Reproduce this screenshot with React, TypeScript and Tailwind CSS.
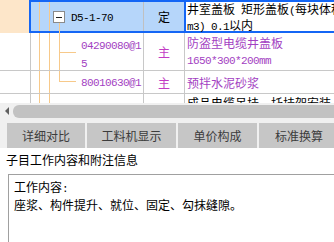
import type { ReactNode } from 'react'

// latin runs: narrow mono so that one char is about 6px, like the bitmap font
function L({ children }: { children: ReactNode }) {
  return <span className="font-['Liberation_Mono',monospace] text-[11px] tracking-[-0.6px]">{children}</span>
}

function VLine({ left, top = 0, h }: { left: number; top?: number; h?: number }) {
  return (
    <div
      className="absolute w-px bg-[#f7c98a]"
      style={{ left, top, height: h ?? '100%' }}
    />
  )
}

function HLine({ left, top, w }: { left: number; top: number; w: number }) {
  return <div className="absolute h-px bg-[#f7c98a]" style={{ left, top, width: w }} />
}

const TABS = [
  { label: '详细对比', w: 'w-[78px]' },
  { label: '工料机显示', w: 'w-[89px]' },
  { label: '单价构成', w: 'w-[79px]' },
  { label: '标准换算', w: 'w-[80px]' },
]

export default function App() {
  return (
    <div className="w-[334px] h-[242px] overflow-hidden bg-white font-['Noto_Sans_CJK_SC',sans-serif] text-[12px] leading-[15px] text-black">
      {/* grid */}
      <div className="h-[103px] overflow-hidden">
        {/* selected row */}
        <div className="flex h-[33px]">
          <div className="w-[29px] shrink-0 bg-[#fde6c9]" />
          <div className="flex w-[420px] shrink-0 border-2 border-[#1466f5] bg-[#b6d6fa]">
            <div className="relative w-[113px] shrink-0 border-r border-[#c0c0c0] flex items-center">
              <VLine left={8} />
              <VLine left={18} />
              <VLine left={28} top={21} />
              <div className="absolute left-[22px] top-[9px] w-[12px] h-[12px] border border-[#8a8a8a] bg-white flex items-center justify-center">
                <div className="w-[6px] h-px bg-[#222]" />
              </div>
              <div className="pl-[40px] leading-[14px]"><L>D5-1-70</L></div>
            </div>
            <div className="w-[40px] shrink-0 flex items-center justify-center">定</div>
            <div className="flex-1 bg-white border-l-2 border-[#1466f5] pl-[1px] whitespace-nowrap leading-[14px]">
              <div>井室盖板<L> </L>矩形盖板<L>(</L>每块体积</div>
              <div><L>m3) 0.1</L>以内</div>
            </div>
          </div>
        </div>

        {/* material 1 */}
        <div className="flex h-[38px] border-b border-[#c8c8c8]">
          <div className="w-[31px] shrink-0 border-r border-[#c8c8c8]" />
          <div className="relative w-[113px] shrink-0 border-r border-[#c8c8c8]">
            <VLine left={8} />
            <VLine left={18} />
            <VLine left={28} />
            <HLine left={28} top={19} w={17} />
            <div className="pl-[50px] pt-[3px] leading-[16px] text-[#a33fc2]">
              <div><L>04290080@1</L></div>
              <div><L>5</L></div>
            </div>
          </div>
          <div className="w-[41px] shrink-0 border-r border-[#c8c8c8] flex items-center justify-center text-[#c23bc4]">主</div>
          <div className="flex-1 pl-[2px] pt-[2px] whitespace-nowrap text-[#a33fc2] leading-[16px]">
            <div>防盗型电缆井盖板</div>
            <div><L>1650*300*200mm</L></div>
          </div>
        </div>

        {/* material 2 */}
        <div className="flex h-[23px] border-b border-[#c8c8c8]">
          <div className="w-[31px] shrink-0 border-r border-[#c8c8c8]" />
          <div className="relative w-[113px] shrink-0 border-r border-[#c8c8c8] flex items-center">
            <VLine left={8} />
            <VLine left={18} />
            <VLine left={28} h={10} />
            <HLine left={28} top={10} w={17} />
            <div className="pl-[50px] text-[#a33fc2]"><L>80010630@1</L></div>
          </div>
          <div className="w-[41px] shrink-0 border-r border-[#c8c8c8] flex items-center justify-center text-[#c23bc4]">主</div>
          <div className="flex-1 pl-[2px] flex items-center whitespace-nowrap text-[#a33fc2]">预拌水泥砂浆</div>
        </div>

        {/* next item, cut by the scrollbar */}
        <div className="flex h-[10px] overflow-hidden">
          <div className="w-[31px] shrink-0 border-r border-[#c8c8c8]" />
          <div className="relative w-[113px] shrink-0 border-r border-[#c8c8c8]">
            <VLine left={8} />
            <VLine left={18} />
          </div>
          <div className="w-[41px] shrink-0 border-r border-[#c8c8c8]" />
          <div className="flex-1 pl-[2px] pt-[1px] whitespace-nowrap">成品电缆吊挂、托挂架安装</div>
        </div>
      </div>

      {/* horizontal scrollbar */}
      <div className="flex h-[16px] items-center bg-[#f0f0f0]">
        <div className="w-[13px] shrink-0 flex items-center justify-center">
          <div className="w-0 h-0 border-y-[4px] border-y-transparent border-r-[4px] border-r-[#606060]" />
        </div>
        <div className="flex-1 h-[13px] rounded-l-[6px] bg-[#c2c2c2]" />
      </div>

      {/* tabs */}
      <div className="h-[4px] bg-[#f0f0f0]" />
      <div className="flex h-[25px] gap-[2px] pl-[7px] bg-[#f0f0f0] whitespace-nowrap">
        {TABS.map((t) => (
          <div key={t.label} className={`${t.w} shrink-0 bg-[#c6c6c6] flex items-center justify-center text-[#3c3c3c]`}>
            {t.label}
          </div>
        ))}
      </div>

      {/* notes panel */}
      <div className="pl-[6px] pt-[4px] leading-[16px]">子目工作内容和附注信息</div>
      <div className="ml-[8px] mt-[6px] h-[80px] border-l border-t border-[#a0a0a0] pl-[5px] pt-[4px] leading-[16px]">
        <div>工作内容<L>:</L></div>
        <div>座浆、构件提升、就位、固定、勾抹缝隙。</div>
      </div>
    </div>
  )
}
